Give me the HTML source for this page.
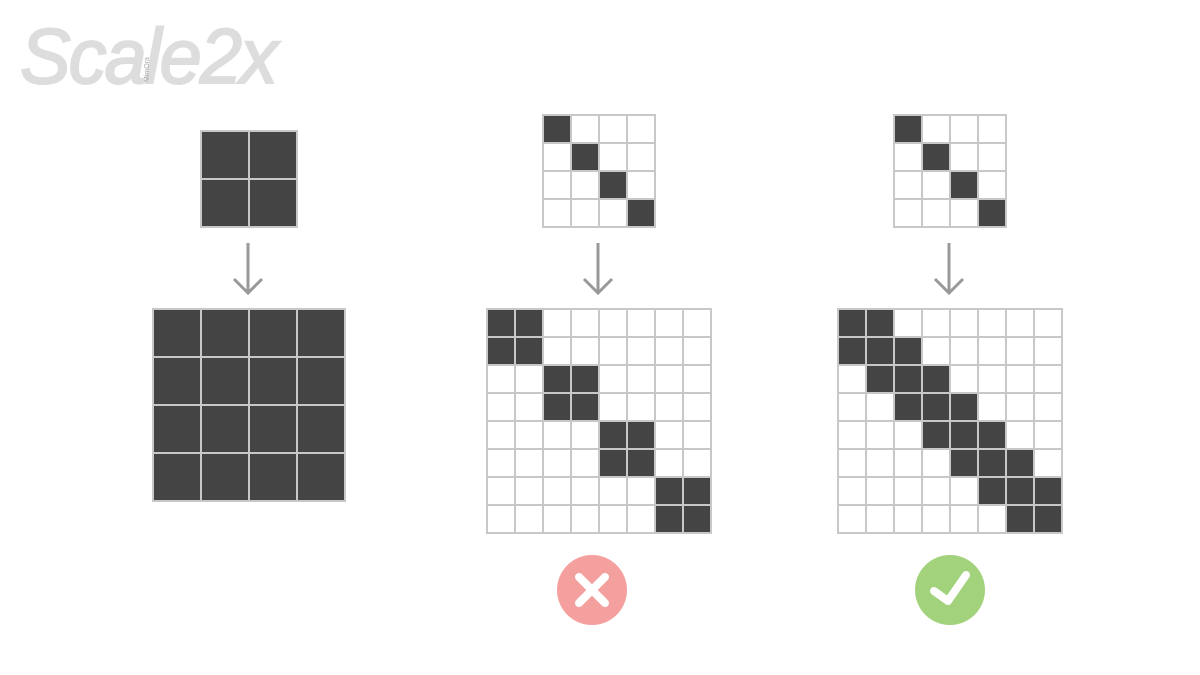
<!DOCTYPE html>
<html><head><meta charset="utf-8"><style>
html,body{margin:0;padding:0;background:#fff;width:1200px;height:675px;overflow:hidden}
svg{display:block}
</style></head><body>
<svg width="1200" height="675" viewBox="0 0 1200 675" xmlns="http://www.w3.org/2000/svg">
<defs>
<pattern id="p28" width="28" height="28" patternUnits="userSpaceOnUse"><rect width="26" height="26" fill="#fff"/></pattern>
</defs>
<text x="20" y="83" font-family="Liberation Sans, sans-serif" font-size="78" font-style="italic" fill="#dddddd" stroke="#dddddd" stroke-width="2" letter-spacing="-2" textLength="256" lengthAdjust="spacingAndGlyphs">Scale2x</text>
<text transform="translate(149,82) rotate(-90)" font-family="Liberation Sans, sans-serif" font-size="7" fill="#aaa">MimOra</text>

<!-- left small -->
<rect x="200" y="130" width="98" height="98" fill="#c8c8c8"/>
<g fill="#444" transform="translate(202,132)">
<rect x="0" y="0" width="46" height="46"/><rect x="48" y="0" width="46" height="46"/>
<rect x="0" y="48" width="46" height="46"/><rect x="48" y="48" width="46" height="46"/>
</g>
<!-- left big -->
<rect x="152" y="308" width="194" height="194" fill="#c8c8c8"/>
<g fill="#444" transform="translate(154,310)">
<rect x="0" y="0" width="46" height="46"/><rect x="48" y="0" width="46" height="46"/><rect x="96" y="0" width="46" height="46"/><rect x="144" y="0" width="46" height="46"/>
<rect x="0" y="48" width="46" height="46"/><rect x="48" y="48" width="46" height="46"/><rect x="96" y="48" width="46" height="46"/><rect x="144" y="48" width="46" height="46"/>
<rect x="0" y="96" width="46" height="46"/><rect x="48" y="96" width="46" height="46"/><rect x="96" y="96" width="46" height="46"/><rect x="144" y="96" width="46" height="46"/>
<rect x="0" y="144" width="46" height="46"/><rect x="48" y="144" width="46" height="46"/><rect x="96" y="144" width="46" height="46"/><rect x="144" y="144" width="46" height="46"/>
</g>

<!-- middle small -->
<rect x="542" y="114" width="114" height="114" fill="#c8c8c8"/>
<g transform="translate(544,116)">
<rect width="112" height="112" fill="url(#p28)"/>
<g fill="#444"><rect x="0" y="0" width="26" height="26"/><rect x="28" y="28" width="26" height="26"/><rect x="56" y="56" width="26" height="26"/><rect x="84" y="84" width="26" height="26"/></g>
</g>
<!-- right small -->
<rect x="893" y="114" width="114" height="114" fill="#c8c8c8"/>
<g transform="translate(895,116)">
<rect width="112" height="112" fill="url(#p28)"/>
<g fill="#444"><rect x="0" y="0" width="26" height="26"/><rect x="28" y="28" width="26" height="26"/><rect x="56" y="56" width="26" height="26"/><rect x="84" y="84" width="26" height="26"/></g>
</g>

<!-- middle big -->
<rect x="486" y="308" width="226" height="226" fill="#c8c8c8"/>
<g transform="translate(488,310)">
<rect width="224" height="224" fill="url(#p28)"/>
<g fill="#444">
<rect x="0" y="0" width="26" height="26"/><rect x="28" y="0" width="26" height="26"/><rect x="0" y="28" width="26" height="26"/><rect x="28" y="28" width="26" height="26"/>
<rect x="56" y="56" width="26" height="26"/><rect x="84" y="56" width="26" height="26"/><rect x="56" y="84" width="26" height="26"/><rect x="84" y="84" width="26" height="26"/>
<rect x="112" y="112" width="26" height="26"/><rect x="140" y="112" width="26" height="26"/><rect x="112" y="140" width="26" height="26"/><rect x="140" y="140" width="26" height="26"/>
<rect x="168" y="168" width="26" height="26"/><rect x="196" y="168" width="26" height="26"/><rect x="168" y="196" width="26" height="26"/><rect x="196" y="196" width="26" height="26"/>
</g></g>

<!-- right big -->
<rect x="837" y="308" width="226" height="226" fill="#c8c8c8"/>
<g transform="translate(839,310)">
<rect width="224" height="224" fill="url(#p28)"/>
<g fill="#444">
<rect x="0" y="0" width="26" height="26"/><rect x="28" y="0" width="26" height="26"/>
<rect x="0" y="28" width="26" height="26"/><rect x="28" y="28" width="26" height="26"/><rect x="56" y="28" width="26" height="26"/>
<rect x="28" y="56" width="26" height="26"/><rect x="56" y="56" width="26" height="26"/><rect x="84" y="56" width="26" height="26"/>
<rect x="56" y="84" width="26" height="26"/><rect x="84" y="84" width="26" height="26"/><rect x="112" y="84" width="26" height="26"/>
<rect x="84" y="112" width="26" height="26"/><rect x="112" y="112" width="26" height="26"/><rect x="140" y="112" width="26" height="26"/>
<rect x="112" y="140" width="26" height="26"/><rect x="140" y="140" width="26" height="26"/><rect x="168" y="140" width="26" height="26"/>
<rect x="140" y="168" width="26" height="26"/><rect x="168" y="168" width="26" height="26"/><rect x="196" y="168" width="26" height="26"/>
<rect x="168" y="196" width="26" height="26"/><rect x="196" y="196" width="26" height="26"/>
</g></g>

<!-- arrows -->
<g stroke="#999" stroke-width="3" fill="none">
<path d="M248 243V293M234 279L248 293L262 279"/>
<path d="M598 243V293M584 279L598 293L612 279"/>
<path d="M949 243V293M935 279L949 293L963 279"/>
</g>

<!-- status icons -->
<circle cx="592" cy="590" r="35" fill="#f4a09e"/>
<path d="M579 577L605 603M605 577L579 603" stroke="#fff" stroke-width="8" stroke-linecap="round"/>
<circle cx="950" cy="590" r="35" fill="#a3d27c"/>
<path d="M934 591L948 601L966 575" stroke="#fff" stroke-width="8" stroke-linecap="round" stroke-linejoin="round" fill="none"/>
</svg>
</body></html>
